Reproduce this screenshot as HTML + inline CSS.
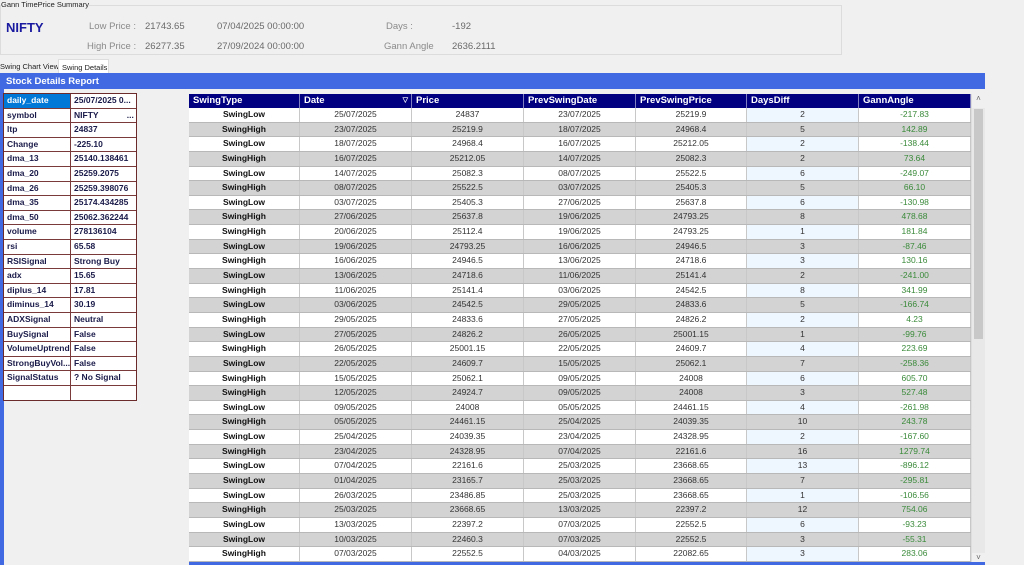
<!DOCTYPE html>
<html><head><meta charset="utf-8"><style>
*{box-sizing:border-box;margin:0;padding:0}
body{width:1024px;height:565px;overflow:hidden;background:#f0f0f0;font-family:"Liberation Sans",sans-serif;position:relative;color:#222}
.abs{position:absolute;white-space:nowrap}
.gb{position:absolute;left:0;top:5px;width:842px;height:50px;border:1px solid #dcdcdc}
.lbl{color:#8a8a8a;font-size:9.5px}
.val{color:#6a6a6a;font-size:9.5px}
.panel{position:absolute;left:0;top:73px;width:985px;height:492px;background:#4169e1}
.inner{position:absolute;left:4px;top:16px;width:981px;height:476px;background:#f0f0f0}
.lg{position:absolute;left:3px;top:93px;width:134px;border:1px solid #6b2b2b;background:#fff}
.lg div.r{height:14.6px;display:flex;border-bottom:1px solid #7a3a3a;font-size:8.5px;font-weight:bold;color:#1a1a4a}
.lg div.r span{line-height:13.6px;padding-left:3px;overflow:hidden}
.lg div.r span:first-child{width:67px;border-right:1px solid #7a3a3a}
.lg div.r span:last-child{flex:1}
.grid{position:absolute;left:189px;top:94px;width:782px;height:471px;background:#fff;overflow:hidden}
.row{display:flex;height:14.65px;border-bottom:1px solid #b8b8b8;font-size:8.5px;color:#333;line-height:13.6px}
.row>span{text-align:center;border-right:1px solid #c8c8c8;overflow:hidden}
.row.g{background:#d3d3d3}
.row>span:nth-child(1){width:111px;font-weight:bold;color:#111}
.row>span:nth-child(2),.row>span:nth-child(3),.row>span:nth-child(4),.row>span:nth-child(6),.row>span:nth-child(7){width:112px}
.row>span:nth-child(5){width:111px}
.row>span:nth-child(6){background:#eef6ff}
.row.g>span:nth-child(6){background:#d3d3d3}
.row>span:nth-child(7){color:#3a8a3a}
.hdr{display:flex;height:14px;background:#000080;color:#fff;font-weight:bold;font-size:9.5px;line-height:14px}
.hdr span{border-right:1px solid #8080c0;padding-left:4px}
.sb{position:absolute;left:971px;top:94px;width:14px;height:471px;background:#e8e8e8;border-left:1px solid #ddd}
</style></head><body>
<div class="gb"></div>
<div class="abs" style="left:1px;top:0;font-size:7.5px;color:#222;background:#f0f0f0">Gann TimePrice Summary</div>
<div class="abs" style="left:6px;top:20px;font-size:13px;font-weight:bold;color:#1a1aa0">NIFTY</div>
<div class="abs lbl" style="left:89px;top:21px">Low Price :</div>
<div class="abs val" style="left:145px;top:21px">21743.65</div>
<div class="abs val" style="left:217px;top:21px">07/04/2025 00:00:00</div>
<div class="abs lbl" style="left:386px;top:21px">Days :</div>
<div class="abs val" style="left:452px;top:21px">-192</div>
<div class="abs lbl" style="left:87px;top:41px">High Price :</div>
<div class="abs val" style="left:145px;top:41px">26277.35</div>
<div class="abs val" style="left:217px;top:41px">27/09/2024 00:00:00</div>
<div class="abs lbl" style="left:384px;top:41px">Gann Angle</div>
<div class="abs val" style="left:452px;top:41px">2636.2111</div>
<div class="abs" style="left:0;top:62px;font-size:7.5px">Swing Chart View</div>
<div class="abs" style="left:58px;top:59px;width:51px;height:15px;background:#fff;border:1px solid #ddd;border-bottom:none;font-size:7.5px;padding:3px 0 0 3px">Swing Details</div>
<div class="panel"><div class="inner"></div></div>
<div class="abs" style="left:6px;top:76px;font-size:9.5px;font-weight:bold;color:#fff">Stock Details Report</div>
<div class="lg">
<div class="r"><span style="background:#0078d7;color:#fff">daily_date</span><span>25/07/2025 0...</span></div>
<div class="r"><span>symbol</span><span>NIFTY &nbsp;&nbsp;&nbsp;&nbsp;&nbsp;&nbsp;&nbsp;&nbsp;&nbsp;&nbsp;&nbsp;...</span></div>
<div class="r"><span>ltp</span><span>24837</span></div>
<div class="r"><span>Change</span><span>-225.10</span></div>
<div class="r"><span>dma_13</span><span>25140.138461</span></div>
<div class="r"><span>dma_20</span><span>25259.2075</span></div>
<div class="r"><span>dma_26</span><span>25259.398076</span></div>
<div class="r"><span>dma_35</span><span>25174.434285</span></div>
<div class="r"><span>dma_50</span><span>25062.362244</span></div>
<div class="r"><span>volume</span><span>278136104</span></div>
<div class="r"><span>rsi</span><span>65.58</span></div>
<div class="r"><span>RSISignal</span><span>Strong Buy</span></div>
<div class="r"><span>adx</span><span>15.65</span></div>
<div class="r"><span>diplus_14</span><span>17.81</span></div>
<div class="r"><span>diminus_14</span><span>30.19</span></div>
<div class="r"><span>ADXSignal</span><span>Neutral</span></div>
<div class="r"><span>BuySignal</span><span>False</span></div>
<div class="r"><span>VolumeUptrend</span><span>False</span></div>
<div class="r"><span>StrongBuyVol...</span><span>False</span></div>
<div class="r"><span>SignalStatus</span><span>? No Signal</span></div>
<div class="r" style="border-bottom:none"><span></span><span></span></div>
</div>
<div class="grid">
<div class="hdr"><span style="width:111px">SwingType</span><span style="width:112px">Date<b style="float:right;font-size:7px;margin-right:3px">▽</b></span><span style="width:112px">Price</span><span style="width:112px">PrevSwingDate</span><span style="width:111px">PrevSwingPrice</span><span style="width:112px">DaysDiff</span><span style="width:112px">GannAngle</span></div>
<div class="row"><span>SwingLow</span><span>25/07/2025</span><span>24837</span><span>23/07/2025</span><span>25219.9</span><span>2</span><span>-217.83</span></div>
<div class="row g"><span>SwingHigh</span><span>23/07/2025</span><span>25219.9</span><span>18/07/2025</span><span>24968.4</span><span>5</span><span>142.89</span></div>
<div class="row"><span>SwingLow</span><span>18/07/2025</span><span>24968.4</span><span>16/07/2025</span><span>25212.05</span><span>2</span><span>-138.44</span></div>
<div class="row g"><span>SwingHigh</span><span>16/07/2025</span><span>25212.05</span><span>14/07/2025</span><span>25082.3</span><span>2</span><span>73.64</span></div>
<div class="row"><span>SwingLow</span><span>14/07/2025</span><span>25082.3</span><span>08/07/2025</span><span>25522.5</span><span>6</span><span>-249.07</span></div>
<div class="row g"><span>SwingHigh</span><span>08/07/2025</span><span>25522.5</span><span>03/07/2025</span><span>25405.3</span><span>5</span><span>66.10</span></div>
<div class="row"><span>SwingLow</span><span>03/07/2025</span><span>25405.3</span><span>27/06/2025</span><span>25637.8</span><span>6</span><span>-130.98</span></div>
<div class="row g"><span>SwingHigh</span><span>27/06/2025</span><span>25637.8</span><span>19/06/2025</span><span>24793.25</span><span>8</span><span>478.68</span></div>
<div class="row"><span>SwingHigh</span><span>20/06/2025</span><span>25112.4</span><span>19/06/2025</span><span>24793.25</span><span>1</span><span>181.84</span></div>
<div class="row g"><span>SwingLow</span><span>19/06/2025</span><span>24793.25</span><span>16/06/2025</span><span>24946.5</span><span>3</span><span>-87.46</span></div>
<div class="row"><span>SwingHigh</span><span>16/06/2025</span><span>24946.5</span><span>13/06/2025</span><span>24718.6</span><span>3</span><span>130.16</span></div>
<div class="row g"><span>SwingLow</span><span>13/06/2025</span><span>24718.6</span><span>11/06/2025</span><span>25141.4</span><span>2</span><span>-241.00</span></div>
<div class="row"><span>SwingHigh</span><span>11/06/2025</span><span>25141.4</span><span>03/06/2025</span><span>24542.5</span><span>8</span><span>341.99</span></div>
<div class="row g"><span>SwingLow</span><span>03/06/2025</span><span>24542.5</span><span>29/05/2025</span><span>24833.6</span><span>5</span><span>-166.74</span></div>
<div class="row"><span>SwingHigh</span><span>29/05/2025</span><span>24833.6</span><span>27/05/2025</span><span>24826.2</span><span>2</span><span>4.23</span></div>
<div class="row g"><span>SwingLow</span><span>27/05/2025</span><span>24826.2</span><span>26/05/2025</span><span>25001.15</span><span>1</span><span>-99.76</span></div>
<div class="row"><span>SwingHigh</span><span>26/05/2025</span><span>25001.15</span><span>22/05/2025</span><span>24609.7</span><span>4</span><span>223.69</span></div>
<div class="row g"><span>SwingLow</span><span>22/05/2025</span><span>24609.7</span><span>15/05/2025</span><span>25062.1</span><span>7</span><span>-258.36</span></div>
<div class="row"><span>SwingHigh</span><span>15/05/2025</span><span>25062.1</span><span>09/05/2025</span><span>24008</span><span>6</span><span>605.70</span></div>
<div class="row g"><span>SwingHigh</span><span>12/05/2025</span><span>24924.7</span><span>09/05/2025</span><span>24008</span><span>3</span><span>527.48</span></div>
<div class="row"><span>SwingLow</span><span>09/05/2025</span><span>24008</span><span>05/05/2025</span><span>24461.15</span><span>4</span><span>-261.98</span></div>
<div class="row g"><span>SwingHigh</span><span>05/05/2025</span><span>24461.15</span><span>25/04/2025</span><span>24039.35</span><span>10</span><span>243.78</span></div>
<div class="row"><span>SwingLow</span><span>25/04/2025</span><span>24039.35</span><span>23/04/2025</span><span>24328.95</span><span>2</span><span>-167.60</span></div>
<div class="row g"><span>SwingHigh</span><span>23/04/2025</span><span>24328.95</span><span>07/04/2025</span><span>22161.6</span><span>16</span><span>1279.74</span></div>
<div class="row"><span>SwingLow</span><span>07/04/2025</span><span>22161.6</span><span>25/03/2025</span><span>23668.65</span><span>13</span><span>-896.12</span></div>
<div class="row g"><span>SwingLow</span><span>01/04/2025</span><span>23165.7</span><span>25/03/2025</span><span>23668.65</span><span>7</span><span>-295.81</span></div>
<div class="row"><span>SwingLow</span><span>26/03/2025</span><span>23486.85</span><span>25/03/2025</span><span>23668.65</span><span>1</span><span>-106.56</span></div>
<div class="row g"><span>SwingHigh</span><span>25/03/2025</span><span>23668.65</span><span>13/03/2025</span><span>22397.2</span><span>12</span><span>754.06</span></div>
<div class="row"><span>SwingLow</span><span>13/03/2025</span><span>22397.2</span><span>07/03/2025</span><span>22552.5</span><span>6</span><span>-93.23</span></div>
<div class="row g"><span>SwingLow</span><span>10/03/2025</span><span>22460.3</span><span>07/03/2025</span><span>22552.5</span><span>3</span><span>-55.31</span></div>
<div class="row"><span>SwingHigh</span><span>07/03/2025</span><span>22552.5</span><span>04/03/2025</span><span>22082.65</span><span>3</span><span>283.06</span></div>
<div class="row g"><span></span><span></span><span></span><span></span><span></span><span></span><span></span></div>
</div>
<div class="sb">
<div style="position:absolute;left:0;top:0;width:13px;height:14px;background:#f0f0f0;font-size:8px;text-align:center;color:#666">˄</div>
<div style="position:absolute;left:2px;top:15px;width:9px;height:230px;background:#c8c8c8"></div>
<div style="position:absolute;left:0;bottom:0;width:13px;height:12px;background:#f0f0f0;font-size:8px;text-align:center;color:#666">˅</div>
</div>
<div class="abs" style="left:189px;top:562px;width:796px;height:3px;background:#4169e1"></div>
</body></html>
